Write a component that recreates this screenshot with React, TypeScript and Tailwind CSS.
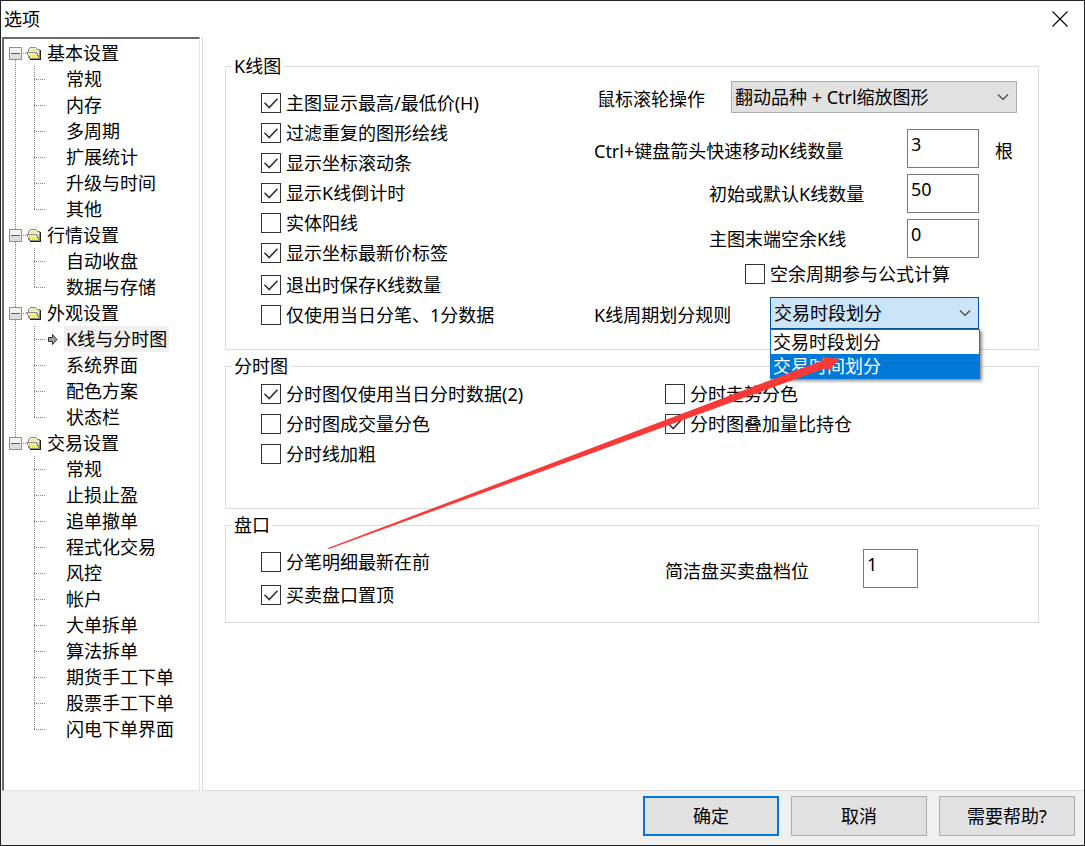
import { useState } from 'react';

type Group = {
  name: string;
  items: string[];
};

const treeGroups: Group[] = [
  { name: '基本设置', items: ['常规', '内存', '多周期', '扩展统计', '升级与时间', '其他'] },
  { name: '行情设置', items: ['自动收盘', '数据与存储'] },
  { name: '外观设置', items: ['K线与分时图', '系统界面', '配色方案', '状态栏'] },
  {
    name: '交易设置',
    items: [
      '常规',
      '止损止盈',
      '追单撤单',
      '程式化交易',
      '风控',
      '帐户',
      '大单拆单',
      '算法拆单',
      '期货手工下单',
      '股票手工下单',
      '闪电下单界面'
    ]
  }
];

const periodRules = ['交易时段划分', '交易时间划分'];

// Expander box, dotted guides and folder in front of a group name
function GroupIcon({ first, last }: { first: boolean; last: boolean }) {
  return (
    <svg width="42" height="26" viewBox="0 0 42 26" className="shrink-0" shapeRendering="crispEdges">
      <g stroke="#808080" strokeDasharray="1 1">
        {!first && <line x1="11.5" y1="0" x2="11.5" y2="7" />}
        {!last && <line x1="11.5" y1="20" x2="11.5" y2="26" />}
        <line x1="19" y1="13.5" x2="23" y2="13.5" />
      </g>
      <rect x="5.5" y="7.5" width="12" height="12" fill="#f2f2f2" stroke="#919191" />
      <rect x="6" y="14" width="11" height="5" fill="#dedede" />
      <line x1="7" y1="13.5" x2="16" y2="13.5" stroke="#3b5fae" />
      <path d="M24.5 17.5V9.5L26.5 7.5H31.5L33.5 9.5H35.5V18.5H26.5Z" fill="#f7f5c4" stroke="#8c8c8c" />
      <path d="M26 9.5H32M27 10.5H34" stroke="#eee640" strokeDasharray="1 1" />
      <path d="M22.5 12.5H32.5L35.5 18.5H26.5Z" fill="#f7f5b0" stroke="#8c8c8c" />
      <path d="M25 14.5H33M26 15.5H33M26 16.5H34M28 17.5H34" stroke="#eee640" strokeDasharray="1 1" />
      <path d="M36.5 10V19M26 19.5H37" stroke="#1f1f1f" />
    </svg>
  );
}

// Dotted guides in front of a page name, with the arrow on the current page
function ItemGuide({ lastItem, lastGroup, active }: { lastItem: boolean; lastGroup: boolean; active: boolean }) {
  return (
    <svg width="60" height="26" viewBox="0 0 60 26" className="shrink-0">
      <g stroke="#808080" strokeDasharray="1 1" shapeRendering="crispEdges">
        {!lastGroup && <line x1="11.5" y1="0" x2="11.5" y2="26" />}
        <line x1="30.5" y1="0" x2="30.5" y2={lastItem ? 14 : 26} />
        <line x1="30" y1="13.5" x2="41" y2="13.5" />
      </g>
      {active && (
        <path d="M44.5 11.5H48.5V8.5L53 13.5L48.5 18.5V15.5H44.5Z" fill="#a0a0a0" stroke="#303030" />
      )}
    </svg>
  );
}

function ChevronDown() {
  return (
    <svg width="12" height="8" viewBox="0 0 12 8" className="pointer-events-none absolute right-2 top-3">
      <path d="M1 1.5L6 6.5L11 1.5" fill="none" stroke="#444444" strokeWidth="1.2" />
    </svg>
  );
}

function CheckBox({ label, checked = false }: { label: string; checked?: boolean }) {
  return (
    <label className="flex h-[30px] items-center gap-[5px]">
      <span className="relative h-5 w-5 shrink-0">
        <input
          type="checkbox"
          defaultChecked={checked}
          className="peer block h-5 w-5 appearance-none border border-[#333333] bg-white"
        />
        <svg
          width="20"
          height="20"
          viewBox="0 0 20 20"
          className="pointer-events-none absolute left-0 top-0 hidden peer-checked:block"
        >
          <path d="M3.5 9.8L8.2 14.5L16.5 5.8" fill="none" stroke="#333333" strokeWidth="1.6" />
        </svg>
      </span>
      <span className="whitespace-nowrap">{label}</span>
    </label>
  );
}

function NumberBox({ id, value, className }: { id: string; value: string; className: string }) {
  return (
    <input
      id={id}
      type="text"
      defaultValue={value}
      className={`h-[39px] border border-[#7a7a7a] bg-white pb-[10px] pl-[3px] outline-none ${className}`}
    />
  );
}

export default function OptionsDialog() {
  const [current, setCurrent] = useState('外观设置/K线与分时图');
  const [rule, setRule] = useState(periodRules[0]);
  const [ruleOpen, setRuleOpen] = useState(true);

  return (
    <div className="flex min-h-screen flex-col border border-[#222222] bg-[#f0f0f0] font-['Noto_Sans','Noto_Sans_CJK_SC',sans-serif] text-[18px] leading-[22px] text-black">
      <header className="flex h-9 items-center justify-between bg-white pl-[3px]">
        <h1>选项</h1>
        <button type="button" aria-label="关闭" className="flex h-full w-12 items-center justify-center">
          <svg width="16" height="16" viewBox="0 0 16 16">
            <path d="M0.5 0.5L15.5 15.5M15.5 0.5L0.5 15.5" stroke="#000000" strokeWidth="1.1" />
          </svg>
        </button>
      </header>

      <div className="flex flex-1">
        {/* Page tree */}
        <div className="flex w-[201px] shrink-0 bg-white pl-px pr-[2px]">
          <nav className="flex-1 border-b border-l-2 border-r border-t-2 border-b-[#e3e3e3] border-l-[#696969] border-r-[#e3e3e3] border-t-[#696969] pt-px">
            <ul>
              {treeGroups.map((group, g) => (
                <li key={group.name}>
                  <div className="flex h-[26px] items-center gap-px">
                    <GroupIcon first={g === 0} last={g === treeGroups.length - 1} />
                    <span>{group.name}</span>
                  </div>
                  <ul>
                    {group.items.map((item, i) => {
                      const key = `${group.name}/${item}`;
                      const active = key === current;
                      return (
                        <li key={key} className="flex h-[26px]">
                          <ItemGuide
                            lastItem={i === group.items.length - 1}
                            lastGroup={g === treeGroups.length - 1}
                            active={active}
                          />
                          <a
                            href="#"
                            onClick={(e) => {
                              e.preventDefault();
                              setCurrent(key);
                            }}
                            className={`flex items-center whitespace-nowrap px-[2px] ${active ? 'bg-[#f0f0f0]' : ''}`}
                          >
                            {item}
                          </a>
                        </li>
                      );
                    })}
                  </ul>
                </li>
              ))}
            </ul>
          </nav>
        </div>

        <main className="flex-1 border-b border-l border-[#dcdcdc] bg-white pl-[22px] pr-[45px] pt-[18px]">
          <div className="relative flex flex-col gap-[5px]">
            <fieldset className="min-w-0 border border-[#dcdcdc] pb-[19px] pl-[35px]">
              <legend className="-ml-[29px] px-[2px]">K线图</legend>
              <div className="grid grid-cols-[333px_1fr]">
                <div className="flex flex-col gap-[2px] pt-[11px]">
                  <div>
                    <CheckBox label="主图显示最高/最低价(H)" checked />
                    <CheckBox label="过滤重复的图形绘线" checked />
                    <CheckBox label="显示坐标滚动条" checked />
                    <CheckBox label="显示K线倒计时" checked />
                    <CheckBox label="实体阳线" />
                    <CheckBox label="显示坐标最新价标签" checked />
                  </div>
                  <div>
                    <CheckBox label="退出时保存K线数量" checked />
                    <CheckBox label="仅使用当日分笔、1分数据" />
                  </div>
                </div>

                <div className="flex flex-col pt-1">
                  <div className="mb-4 flex items-center gap-[26px]">
                    <label htmlFor="wheel" className="w-[111px] pt-1 text-right">
                      鼠标滚轮操作
                    </label>
                    <div className="relative mr-[21px] flex-1">
                      <select
                        id="wheel"
                        className="block h-8 w-full appearance-none border border-[#adadad] bg-[#e1e1e1] pl-[3px] outline-none"
                      >
                        <option>翻动品种 + Ctrl缩放图形</option>
                      </select>
                      <ChevronDown />
                    </div>
                  </div>

                  <div className="flex flex-col gap-[6px]">
                    <div className="flex items-center">
                      <label htmlFor="step" className="w-[313px] whitespace-nowrap pt-1">
                        Ctrl+键盘箭头快速移动K线数量
                      </label>
                      <NumberBox id="step" value="3" className="w-[72px]" />
                      <span className="pl-4 pt-1">根</span>
                    </div>
                    <div className="flex items-center">
                      <label htmlFor="initial" className="w-[313px] whitespace-nowrap pl-[115px]">
                        初始或默认K线数量
                      </label>
                      <NumberBox id="initial" value="50" className="w-[72px]" />
                    </div>
                    <div className="flex items-center">
                      <label htmlFor="spare" className="w-[313px] whitespace-nowrap pl-[115px]">
                        主图末端空余K线
                      </label>
                      <NumberBox id="spare" value="0" className="w-[72px]" />
                    </div>
                  </div>

                  <div className="pb-2 pl-[151px] pt-px">
                    <CheckBox label="空余周期参与公式计算" />
                  </div>

                  <div className="flex items-center">
                    <label htmlFor="rule" className="w-[176px] whitespace-nowrap pt-1">
                      K线周期划分规则
                    </label>
                    <div className="relative w-[209px]">
                      <select
                        id="rule"
                        value={rule}
                        onChange={(e) => setRule(e.target.value)}
                        className="block h-8 w-full appearance-none border border-[#005499] bg-[#cce4f7] pl-[3px] outline-none"
                      >
                        {periodRules.map((r) => (
                          <option key={r}>{r}</option>
                        ))}
                      </select>
                      <ChevronDown />
                      {ruleOpen && (
                        <ul
                          role="listbox"
                          className="absolute left-0 top-8 z-10 w-[210px] border border-[#0078d7] bg-white shadow-[2px_2px_3px_rgba(0,0,0,0.45)]"
                        >
                          {periodRules.map((r, i) => (
                            <li
                              key={r}
                              role="option"
                              aria-selected={r === rule}
                              onClick={() => {
                                setRule(r);
                                setRuleOpen(false);
                              }}
                              className={`h-6 pl-[2px] leading-6 ${i === 1 ? 'bg-[#0078d7] text-white' : ''}`}
                            >
                              {r}
                            </li>
                          ))}
                        </ul>
                      )}
                    </div>
                  </div>
                </div>
              </div>
            </fieldset>

            <fieldset className="min-w-0 border border-[#dcdcdc] pb-[39px] pl-[35px]">
              <legend className="-ml-[29px] px-[2px]">分时图</legend>
              <div className="grid grid-cols-[404px_1fr] pt-[2px]">
                <div>
                  <CheckBox label="分时图仅使用当日分时数据(2)" checked />
                  <CheckBox label="分时图成交量分色" />
                  <CheckBox label="分时线加粗" />
                </div>
                <div>
                  <CheckBox label="分时走势分色" />
                  <CheckBox label="分时图叠加量比持仓" checked />
                </div>
              </div>
            </fieldset>

            <fieldset className="min-w-0 border border-[#dcdcdc] pb-3 pl-[35px]">
              <legend className="-ml-[29px] px-[2px]">盘口</legend>
              <div className="grid grid-cols-[404px_1fr] pt-[11px]">
                <div className="flex flex-col gap-[3px]">
                  <CheckBox label="分笔明细最新在前" />
                  <CheckBox label="买卖盘口置顶" checked />
                </div>
                <div className="flex items-start pt-[2px]">
                  <div className="flex items-center">
                    <label htmlFor="depth" className="w-[198px] whitespace-nowrap pt-1">
                      简洁盘买卖盘档位
                    </label>
                    <NumberBox id="depth" value="1" className="w-[55px]" />
                  </div>
                </div>
              </div>
            </fieldset>

            {/* Pointer drawn over the form, ending on the open list */}
            <svg
              width="514"
              height="194"
              viewBox="328 356 514 194"
              className="pointer-events-none absolute left-[103px] top-[301px] z-20"
            >
              <path d="M328 548L823.5 360L821.5 357L840 359L828 371L826 368L329 549Z" fill="#fb3a38" />
            </svg>
          </div>
        </main>
      </div>

      <footer className="flex justify-end gap-3 pb-[9px] pr-[9px] pt-[5px]">
        <button type="button" className="h-10 w-[136px] border-2 border-[#0078d7] bg-[#e1e1e1]">
          确定
        </button>
        <button type="button" className="h-10 w-[136px] border border-[#adadad] bg-[#e1e1e1]">
          取消
        </button>
        <button type="button" className="h-10 w-[136px] border border-[#adadad] bg-[#e1e1e1]">
          需要帮助?
        </button>
      </footer>
    </div>
  );
}
